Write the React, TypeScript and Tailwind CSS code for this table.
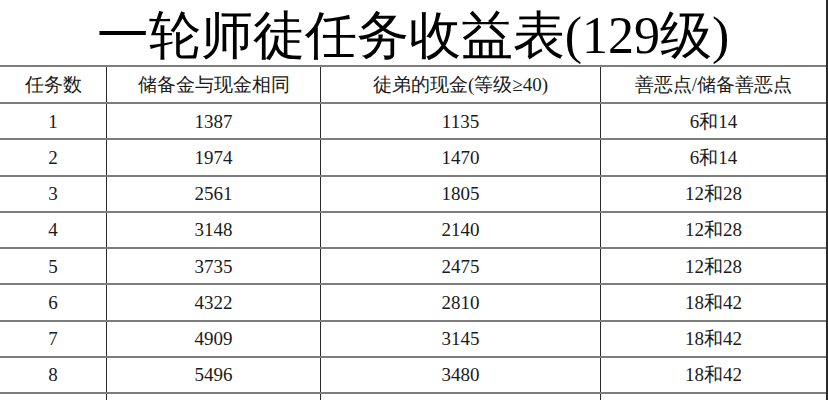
const rows = [
  ['1', '1387', '1135', '6和14'],
  ['2', '1974', '1470', '6和14'],
  ['3', '2561', '1805', '12和28'],
  ['4', '3148', '2140', '12和28'],
  ['5', '3735', '2475', '12和28'],
  ['6', '4322', '2810', '18和42'],
  ['7', '4909', '3145', '18和42'],
  ['8', '5496', '3480', '18和42'],
];

const headers = ['任务数', '储备金与现金相同', '徒弟的现金(等级≥40)', '善恶点/储备善恶点'];

function Row({ cells, header }: { cells: string[]; header?: boolean }) {
  return (
    <div
      className={`grid grid-cols-[106px_214px_280px_226px] border-t-2 border-[#7d7d7d] ${
        header ? 'h-[37px]' : 'h-[36.25px]'
      }`}
    >
      {cells.map((c, i) => (
        <div
          key={i}
          className={`flex items-center justify-center text-[19px] leading-none text-[#1a1a1a] ${
            i > 0 ? 'border-l-[1.5px] border-[#2a2a2a]' : ''
          }`}
        >
          {c}
        </div>
      ))}
    </div>
  );
}

export default function App() {
  return (
    <div className="w-[828px] h-[400px] overflow-hidden bg-white font-['Liberation_Serif',serif]">
      <div className="border-r-2 border-[#2a2a2a]">
        {/* Title */}
        <div className="h-[65px] flex items-end justify-center pb-[3px]">
          <h1 className="text-[52px] leading-none text-black">
            一轮师徒任务收益表(129级)
          </h1>
        </div>

        {/* Table */}
        <Row cells={headers} header />
        {rows.map((r) => (
          <Row key={r[0]} cells={r} />
        ))}
        {/* partly visible next row */}
        <Row cells={['', '', '', '']} />
      </div>
    </div>
  );
}
